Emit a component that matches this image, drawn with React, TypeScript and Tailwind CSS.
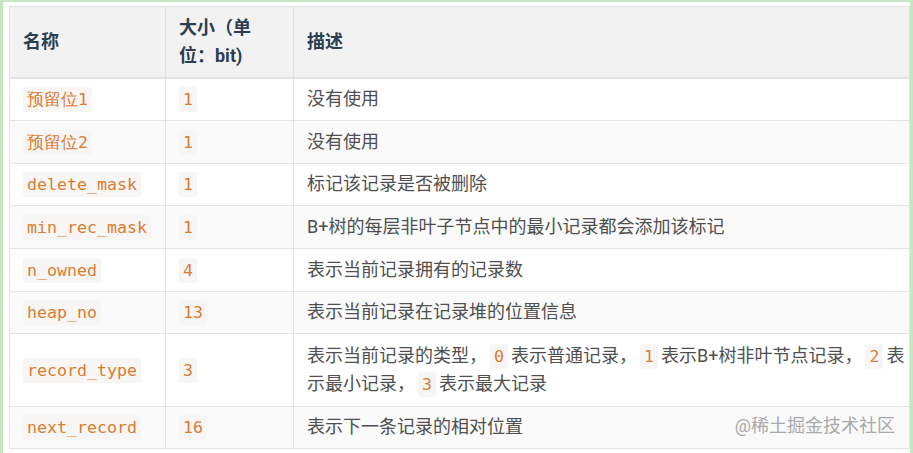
import React from "react";

const C = ({ children, m }: { children: React.ReactNode; m?: boolean }) => (
  <code
    className={
      "rounded-[3px] bg-[#f8f6f4] px-[4px] py-[3px] align-baseline text-[16.6px] leading-none text-[#d97c33] [font-family:'DejaVu_Sans_Mono',monospace]" +
      (m ? " ml-[3px] mr-[3px] bg-[#f7f7f7] px-[3px]" : "")
    }
  >
    {children}
  </code>
);

const rows: { name: React.ReactNode; size: string; desc: React.ReactNode; h: string }[] = [
  { name: <C>预留位1</C>, size: "1", desc: "没有使用", h: "h-[42px] py-[6px]" },
  { name: <C>预留位2</C>, size: "1", desc: "没有使用", h: "h-[43px] py-[6px]" },
  { name: <C>delete_mask</C>, size: "1", desc: "标记该记录是否被删除", h: "h-[42px] py-[6px]" },
  { name: <C>min_rec_mask</C>, size: "1", desc: "B+树的每层非叶子节点中的最小记录都会添加该标记", h: "h-[43px] py-[6px]" },
  { name: <C>n_owned</C>, size: "4", desc: "表示当前记录拥有的记录数", h: "h-[43px] py-[6px]" },
  { name: <C>heap_no</C>, size: "13", desc: "表示当前记录在记录堆的位置信息", h: "h-[42px] py-[6px]" },
  {
    name: <C>record_type</C>,
    size: "3",
    h: "h-[73px] py-[8px]",
    desc: (
      <>
        <span className="whitespace-nowrap">
          表示当前记录的类型，<C m>0</C>表示普通记录，<C m>1</C>表示B+树非叶节点记录，<C m>2</C>表
        </span>
        <br />
        <span className="whitespace-nowrap">
          示最小记录，<C m>3</C>表示最大记录
        </span>
      </>
    ),
  },
  { name: <C>next_record</C>, size: "16", desc: "表示下一条记录的相对位置", h: "h-[42px] py-[6px]" },
];

export default function App() {
  return (
    <div className="h-[453px] w-[913px] overflow-hidden bg-[#c4e8c1] pl-[3px] pr-[3px] pt-[2px] [font-family:Roboto,'Noto_Sans_CJK_SC',sans-serif]">
      <div className="relative h-[451px] bg-white pl-[6px] pt-[4px]">
        <table className="w-[900px] table-fixed border-collapse text-[18px] leading-[28px]">
          <colgroup>
            <col className="w-[156px]" />
            <col className="w-[128px]" />
            <col className="w-[616px]" />
          </colgroup>
          <thead>
            <tr className="bg-[#f2f2f2]">
              <th className="border border-b-2 border-[#e2e2e2] px-[13px] py-[7px] text-left align-middle font-bold text-[#2c3e50]">
                名称
              </th>
              <th className="border border-b-2 border-[#e2e2e2] px-[13px] py-[7px] text-left align-middle font-bold text-[#2c3e50]">
                大小（单
                <br />
                位：bit)
              </th>
              <th className="border border-b-2 border-[#e2e2e2] px-[13px] py-[7px] text-left align-middle font-bold text-[#2c3e50]">
                描述
              </th>
            </tr>
          </thead>
          <tbody>
            {rows.map((r, i) => {
              const cell = "border border-[#e4e4e4] px-[13px] align-middle " + r.h;
              return (
                <tr key={i} className={i % 2 === 1 ? "bg-[#fafafa]" : "bg-white"}>
                  <td className={cell}>{r.name}</td>
                  <td className={cell}>
                    <C>{r.size}</C>
                  </td>
                  <td className={cell + " text-[#4f4f4f]"}>{r.desc}</td>
                </tr>
              );
            })}
          </tbody>
        </table>
        <div className="absolute bottom-[13px] right-[15px] text-[18px] leading-[28px] text-[#a9a9a9]">
          @稀土掘金技术社区
        </div>
      </div>
    </div>
  );
}
